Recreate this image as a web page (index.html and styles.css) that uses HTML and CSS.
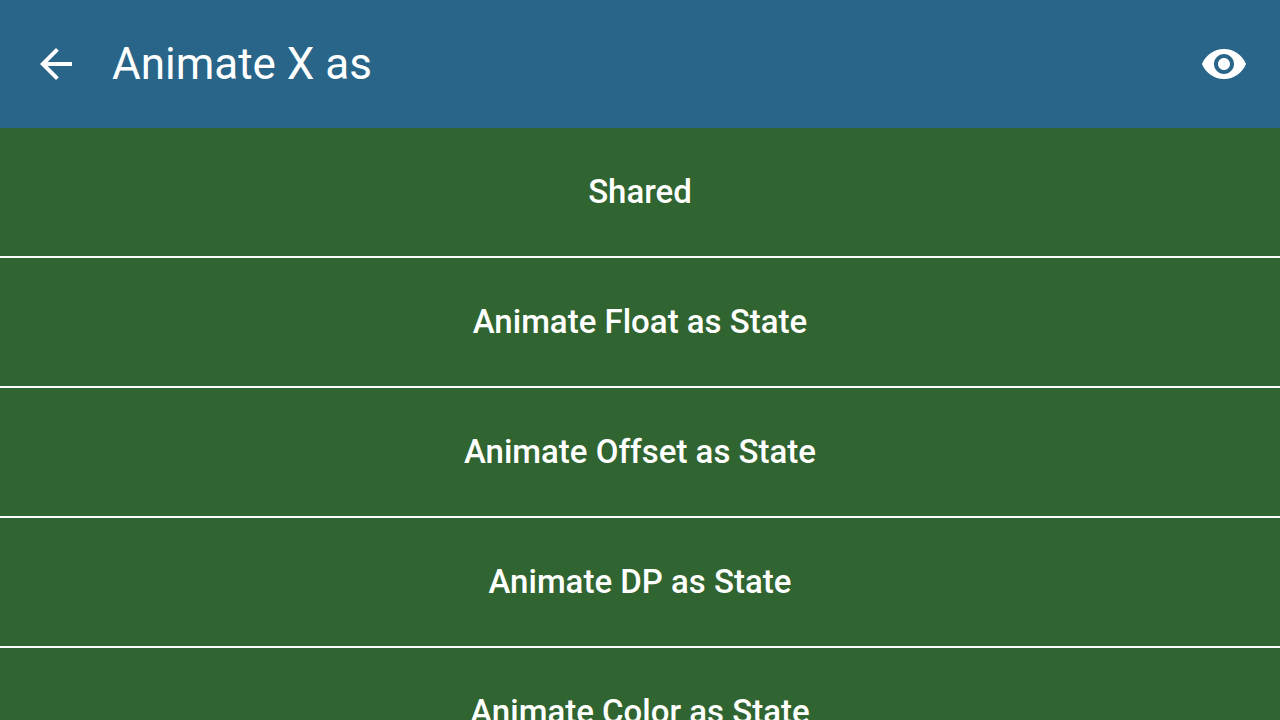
FILE: index.html
```html
<!DOCTYPE html>
<html lang="en">
<head>
<meta charset="utf-8">
<meta name="viewport" content="width=device-width, initial-scale=1">
<title>Animate X as</title>
<link rel="stylesheet" href="styles.css">
</head>
<body>
<header class="app-bar">
  <button class="icon-button" type="button" aria-label="Back">
    <svg class="icon" viewBox="0 0 24 24" aria-hidden="true"><path d="M20 11H7.83l5.59-5.59L12 4l-8 8 8 8 1.41-1.41L7.83 13H20v-2z"/></svg>
  </button>
  <h1 class="title">Animate X as</h1>
  <button class="icon-button" type="button" aria-label="Show preview">
    <svg class="icon" viewBox="0 0 24 24" aria-hidden="true"><path d="M12 4.5C7 4.5 2.73 7.61 1 12c1.73 4.39 6 7.5 11 7.5s9.27-3.11 11-7.5c-1.73-4.39-6-7.5-11-7.5zM12 17c-2.76 0-5-2.24-5-5s2.24-5 5-5 5 2.24 5 5-2.24 5-5 5zm0-8c-1.66 0-3 1.34-3 3s1.34 3 3 3 3-1.34 3-3-1.34-3-3-3z"/></svg>
  </button>
</header>
<main class="list">
  <button class="row" type="button">Shared</button>
  <button class="row" type="button">Animate Float as State</button>
  <button class="row" type="button">Animate Offset as State</button>
  <button class="row" type="button">Animate DP as State</button>
  <button class="row" type="button">Animate Color as State</button>
</main>
</body>
</html>
```

FILE: styles.css
```css
* {
  box-sizing: border-box;
}

body {
  margin: 0;
  height: 100vh;
  display: flex;
  flex-direction: column;
  overflow: hidden;
  font-family: Roboto, "Noto Sans", sans-serif;
  color: #fff;
  background: #306430;
}

.app-bar {
  flex: none;
  display: flex;
  align-items: center;
  gap: 8px;
  padding: 16px 8px;
  background: #286588;
}

.icon-button {
  display: flex;
  align-items: center;
  justify-content: center;
  width: 96px;
  height: 96px;
  padding: 0;
  border: 0;
  color: inherit;
  background: none;
}

.icon {
  width: 48px;
  height: 48px;
  fill: currentColor;
}

.title {
  flex: 1;
  margin: 0;
  font-size: 44px;
  line-height: 56px;
  font-weight: 400;
}

.list {
  flex: 1;
  min-height: 0;
  overflow-y: auto;
  scrollbar-width: none;
  display: flex;
  flex-direction: column;
}

.row {
  flex: none;
  padding: 40px 16px;
  border: 0;
  border-bottom: 2px solid #fff;
  color: inherit;
  background: #306430;
  font-family: inherit;
  font-size: 33px;
  line-height: 48px;
  font-weight: 500;
  text-align: center;
}
```
